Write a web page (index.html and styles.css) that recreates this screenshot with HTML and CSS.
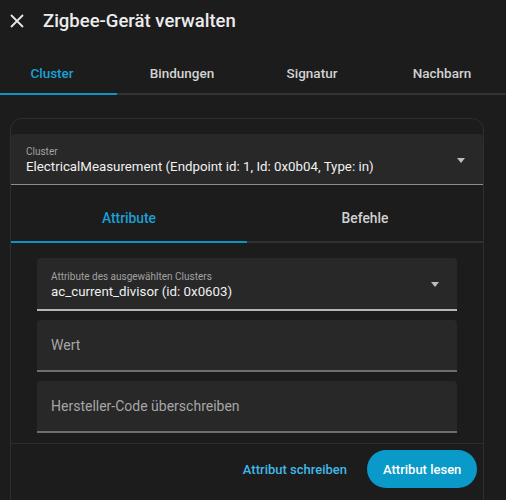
FILE: index.html
```html
<!DOCTYPE html>
<html lang="de">
<head>
<meta charset="utf-8">
<title>Zigbee-Gerät verwalten</title>
<link rel="stylesheet" href="styles.css">
</head>
<body>
<div class="dialog">
  <header class="header">
    <svg class="close" width="14" height="14" viewBox="0 0 14 14"><path d="M1 1L13 13M13 1L1 13" stroke="#e6e6e6" stroke-width="1.8" fill="none"/></svg>
    <h1 class="title">Zigbee-Gerät verwalten</h1>
  </header>
  <nav class="tabs">
    <div class="tabs-row">
      <div class="tab active">Cluster</div>
      <div class="tab">Bindungen</div>
      <div class="tab">Signatur</div>
      <div class="tab">Nachbarn</div>
    </div>
  </nav>
  <section class="card">
    <div class="select cluster-select">
      <div class="select-text">
        <div class="label">Cluster</div>
        <div class="value">ElectricalMeasurement (Endpoint id: 1, Id: 0x0b04, Type: in)</div>
      </div>
      <span class="arrow"></span>
    </div>
    <div class="subtabs">
      <div class="subtab active">Attribute</div>
      <div class="subtab">Befehle</div>
    </div>
    <div class="scroll">
      <div class="field select attr-select">
        <div class="select-text">
          <div class="label">Attribute des ausgewählten Clusters</div>
          <div class="value">ac_current_divisor (id: 0x0603)</div>
        </div>
        <span class="arrow"></span>
      </div>
      <div class="field input">Wert</div>
      <div class="field input">Hersteller-Code überschreiben</div>
    </div>
    <footer class="actions">
      <button class="btn text-btn">Attribut schreiben</button>
      <button class="btn filled-btn">Attribut lesen</button>
    </footer>
  </section>
</div>
</body>
</html>
```
FILE: styles.css
```css
html, body {
  margin: 0;
  padding: 0;
  background: #1c1c1c;
  font-family: Roboto, "Noto Sans", sans-serif;
  color: #e1e1e1;
}
.dialog {
  width: 506px;
  height: 500px;
  overflow: hidden;
}
.header {
  display: flex;
  align-items: center;
  height: 41px;
  padding-left: 10px;
}
.close {
  display: block;
}
.title {
  margin: 0 0 0 19px;
  font-size: 18.5px;
  font-weight: 500;
  color: #ececec;
}
.tabs {
  overflow: hidden;
  height: 54px;
}
.tabs-row {
  display: flex;
  margin-left: -13px;
  padding-top: 6px;
}
.tab {
  flex: 0 0 130px;
  height: 46px;
  line-height: 52px;
  text-align: center;
  font-size: 13.5px;
  font-weight: 500;
  color: #d2d2d2;
  border-bottom: 2px solid #333333;
}
.tab.active {
  color: #1aa0d6;
  border-bottom-color: #0b95c4;
}
.card {
  margin: 23px 0 0 10px;
  width: 472px;
  height: 376px;
  border: 1px solid #2e2e2e;
  border-radius: 12px;
  background: #1c1c1c;
  overflow: hidden;
  padding-top: 15px;
  box-sizing: content-box;
}
.select {
  display: flex;
  align-items: center;
  background: #282828;
  border-radius: 4px 4px 0 0;
}
.cluster-select {
  height: 50px;
  border-bottom: 1px solid #8e8e8e;
  padding: 0 18px 0 15px;
}
.select-text {
  flex: 1;
  min-width: 0;
  padding-top: 4px;
}
.label {
  font-size: 10px;
  color: #a2a2a2;
  line-height: 12px;
}
.value {
  font-size: 13.3px;
  line-height: 18px;
  color: #f0f0f0;
  white-space: nowrap;
}
.arrow {
  width: 0;
  height: 0;
  border-left: 4.5px solid transparent;
  border-right: 4.5px solid transparent;
  border-top: 5px solid #bdbdbd;
  margin-top: 2px;
}
.subtabs {
  display: flex;
}
.subtab {
  flex: 1;
  height: 56px;
  line-height: 66px;
  text-align: center;
  font-size: 13.8px;
  font-weight: 500;
  color: #d2d2d2;
  border-bottom: 2px solid #303030;
}
.subtab.active {
  color: #1aa0d6;
  border-bottom-color: #0b95c4;
}
.scroll {
  height: 200px;
  overflow: hidden;
  padding: 15px 26px 0;
  box-sizing: border-box;
  display: flex;
  flex-direction: column;
  gap: 9px;
}
.field {
  flex: 0 0 auto;
  background: #282828;
  border-radius: 4px 4px 0 0;
  box-sizing: border-box;
  padding: 0 18px 0 14px;
}
.attr-select {
  height: 53px;
  border-bottom: 2px solid #b5b5b5;
}
.input {
  height: 52px;
  line-height: 50px;
  border-bottom: 2px solid #6e6e6e;
  font-size: 14px;
  color: #a6a6a6;
}
.actions {
  display: flex;
  justify-content: flex-end;
  align-items: center;
  gap: 6px;
  border-top: 1px solid #2e2e2e;
  padding: 6px 6px 0 0;
}
.btn {
  font-family: Roboto, "Noto Sans", sans-serif;
  font-size: 13px;
  font-weight: 500;
  border: none;
  height: 38px;
  border-radius: 19px;
  cursor: pointer;
  white-space: nowrap;
}
.text-btn {
  background: transparent;
  color: #41b8e8;
  padding: 0 14px;
}
.filled-btn {
  background: #0a9ac9;
  color: #ffffff;
  padding: 0 16px;
  width: 110px;
}
```
